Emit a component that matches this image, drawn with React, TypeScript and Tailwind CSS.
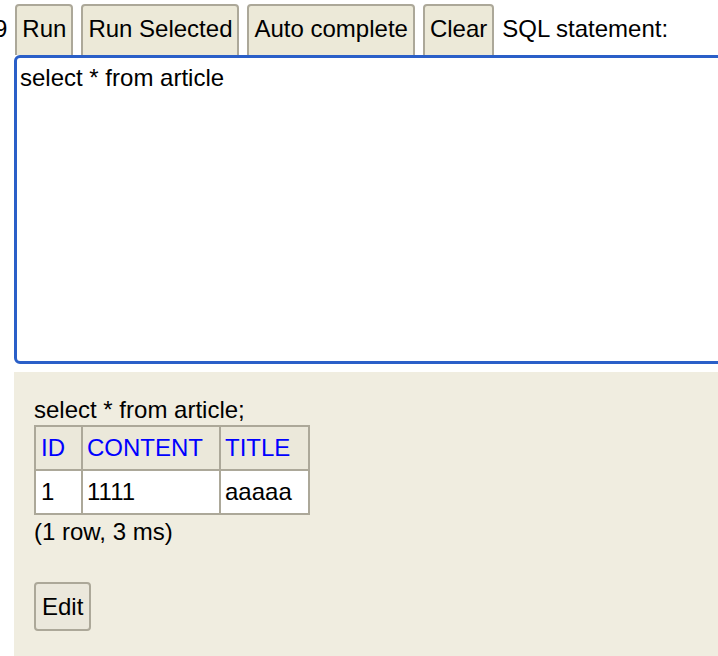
import React from "react";

const font = { fontFamily: '"Liberation Sans", Arial, sans-serif' };

function Btn({ children }: { children: React.ReactNode }) {
  return (
    <div className="shrink-0 h-[60px] rounded-[4px] border-2 border-[#aca899] bg-[#ece9d8] px-[5px] pt-[9px] text-[24px] leading-[27px] text-black">
      {children}
    </div>
  );
}

export default function App() {
  return (
    <div className="w-[718px] h-[656px] overflow-hidden bg-white text-black" style={font}>
      <div className="flex h-[55px] items-start gap-[8px] overflow-hidden pt-[4px] ml-[-6px]">
        <div className="shrink-0 pt-[11px] text-[24px] leading-[27px]">9</div>
        <Btn>Run</Btn>
        <Btn>Run Selected</Btn>
        <Btn>Auto complete</Btn>
        <Btn>Clear</Btn>
        <div className="shrink-0 pt-[11px] text-[24px] leading-[27px]">SQL statement:</div>
      </div>
      <div className="ml-[14px] h-[309px] w-[740px] rounded-[6px] border-[3px] border-[#2a5fc8] pl-[3px] pt-[6px] text-[24px] leading-[27px]">
        select * from article
      </div>
      <div className="ml-[14px] mt-[8px] h-[300px] w-[720px] bg-[#f0ede0] pl-[20px] pt-[24px] text-[24px] leading-[27px]">
        <div>select * from article;</div>
        <table className="mt-[2px] border-collapse">
          <thead>
            <tr className="bg-[#ebe8da] text-[#0000ff]">
              <th className="border-2 border-[#aca899] py-[7px] pl-[5px] pr-[16px] text-left font-normal leading-[28px]">ID</th>
              <th className="border-2 border-[#aca899] py-[7px] pl-[4px] pr-[16px] text-left font-normal leading-[28px]">CONTENT</th>
              <th className="border-2 border-[#aca899] py-[7px] pl-[4px] pr-[16px] text-left font-normal leading-[28px]">TITLE</th>
            </tr>
          </thead>
          <tbody>
            <tr className="bg-white">
              <td className="border-2 border-[#aca899] py-[7px] pl-[5px] pr-[16px] leading-[28px]">1</td>
              <td className="border-2 border-[#aca899] py-[7px] pl-[4px] pr-[16px] leading-[28px]">1111</td>
              <td className="border-2 border-[#aca899] py-[7px] pl-[4px] pr-[16px] leading-[28px]">aaaaa</td>
            </tr>
          </tbody>
        </table>
        <div className="mt-[3px]">(1 row, 3 ms)</div>
        <div className="mt-[37px] inline-block rounded-[4px] border-2 border-[#aca899] bg-[#ebe8dc] px-[6px] py-[9px] leading-[27px]">
          Edit
        </div>
      </div>
    </div>
  );
}
